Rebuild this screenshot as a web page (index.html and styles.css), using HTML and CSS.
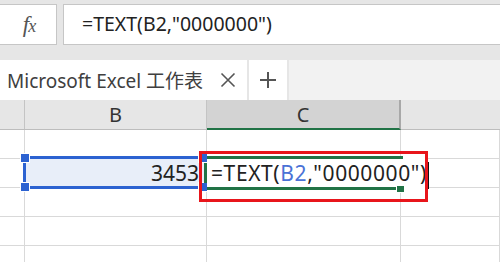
FILE: index.html
```html
<!DOCTYPE html>
<html lang="zh">
<head>
    <meta charset="UTF-8">
    <meta name="viewport" content="width=device-width, initial-scale=1.0">
    <title>Microsoft Excel 工作表</title>
    <link rel="stylesheet" href="styles.css">
</head>
<body>
    <div class="formula-bar">
        <div class="fx-box"><span class="fx">f<span class="fx-x">x</span></span></div>
        <div class="formula-input">=TEXT(B2,"0000000")</div>
    </div>

    <div class="tabs">
        <div class="tab">
            <span class="tab-name">Microsoft Excel 工作表</span>
            <svg class="tab-close" width="16" height="16" viewBox="0 0 16 16">
                <path d="M1.5 1.5 L14.5 14.5 M14.5 1.5 L1.5 14.5" stroke="#555" stroke-width="1.6" fill="none"/>
            </svg>
        </div>
        <div class="tab-add">
            <svg width="18" height="18" viewBox="0 0 18 18">
                <path d="M9 1 V17 M1 9 H17" stroke="#555" stroke-width="2" fill="none"/>
            </svg>
        </div>
        <div class="tab-rest"></div>
    </div>

    <div class="sheet">
        <div class="col-head">
            <div class="head corner"></div>
            <div class="head col-b">B</div>
            <div class="head col-c selected">C</div>
            <div class="head col-d"></div>
        </div>

        <div class="row">
            <div class="cell corner"></div>
            <div class="cell col-b"></div>
            <div class="cell col-c"></div>
            <div class="cell col-d"></div>
        </div>
        <div class="row">
            <div class="cell corner"></div>
            <div class="cell col-b num active">3453</div>
            <div class="cell col-c"></div>
            <div class="cell col-d"></div>
        </div>
        <div class="row">
            <div class="cell corner"></div>
            <div class="cell col-b"></div>
            <div class="cell col-c"></div>
            <div class="cell col-d"></div>
        </div>
        <div class="row">
            <div class="cell corner"></div>
            <div class="cell col-b"></div>
            <div class="cell col-c"></div>
            <div class="cell col-d"></div>
        </div>
        <div class="row">
            <div class="cell corner"></div>
            <div class="cell col-b"></div>
            <div class="cell col-c"></div>
            <div class="cell col-d"></div>
        </div>

        <!-- 引用区域 B2 -->
        <div class="ref-box">
            <span class="handle h-tl"></span>
            <span class="handle h-bl"></span>
            <span class="handle h-tr"></span>
            <span class="handle h-br"></span>
        </div>

        <!-- 正在编辑的 C2 -->
        <div class="editor">
            <div class="editor-frame"></div>
            <span class="editor-bar"></span>
            <span class="fill-handle"></span>
            <div class="editor-text">=TEXT(<span class="ref">B2</span>,"0000000")<span class="caret"></span></div>
        </div>

        <div class="mark"></div>
    </div>
</body>
</html>
```

FILE: styles.css
```css
body {
    margin: 0;
    font-family: "Noto Sans", "Noto Sans CJK SC", sans-serif;
    background-color: #fff;
    color: #222;
    overflow: hidden;
}
.formula-bar {
    background-color: #e6e6e6;
    padding: 4px 0 15px;
    display: flex;
    gap: 6px;
}
.fx-box {
    width: 57px;
    height: 41px;
    box-sizing: border-box;
    background-color: #fff;
    border: 1px solid #c6c6c6;
    border-left: none;
    display: flex;
    align-items: center;
    justify-content: center;
}
.fx {
    font-family: "Liberation Serif", serif;
    font-style: italic;
    font-size: 23px;
    color: #555;
    margin-left: 2px;
    letter-spacing: -1px;
}
.fx-x {
    font-size: 18px;
}
.formula-input {
    flex: 1;
    height: 41px;
    box-sizing: border-box;
    background-color: #fff;
    border: 1px solid #c6c6c6;
    border-right: none;
    padding-left: 18px;
    font-size: 19.5px;
    line-height: 38px;
}
.tabs {
    display: flex;
    height: 40px;
    background-color: #e6e6e6;
}
.tab {
    width: 247px;
    background-color: #fff;
    display: flex;
    align-items: center;
    padding-left: 7px;
    box-sizing: border-box;
}
.tab-name {
    font-size: 19px;
    color: #404040;
}
.tab-close {
    margin-left: 17px;
}
.tab-add {
    width: 38px;
    margin-left: 2px;
    background-color: #fff;
    display: flex;
    align-items: center;
    justify-content: center;
}
.tab-rest {
    flex: 1;
    margin-left: 2px;
    background-color: #f2f2f2;
}
.sheet {
    position: relative;
}
.col-head {
    display: flex;
    height: 30px;
    background-color: #e6e6e6;
    border-bottom: 1px solid #bdbdbd;
    box-sizing: border-box;
}
.head {
    border-right: 1px solid #c4c4c4;
    text-align: center;
    font-size: 20px;
    line-height: 30px;
    color: #333;
    box-sizing: border-box;
}
.head.selected {
    background-color: #d3d3d3;
    border-bottom: 2px solid #217346;
    border-right: 2px solid #a8a8a8;
    height: 30px;
}
.corner {
    width: 25px;
}
.col-b {
    width: 182px;
}
.col-c {
    width: 194px;
}
.col-d {
    flex: 1;
    border-right: none;
}
.row {
    display: flex;
    height: 29px;
}
.cell {
    border-right: 1px solid #d9d9d9;
    border-bottom: 1px solid #d9d9d9;
    box-sizing: border-box;
    font-size: 21px;
    line-height: 28px;
}
.cell.num {
    text-align: right;
    padding-right: 7px;
}
.cell.active {
    background-color: #e8eef9;
}
.ref-box {
    position: absolute;
    left: 23px;
    top: 56px;
    width: 181px;
    height: 33px;
    box-sizing: border-box;
    border: 3px solid #2c62d1;
    border-right: none;
}
.handle {
    position: absolute;
    width: 8px;
    height: 8px;
    background-color: #2c62d1;
    border: 1px solid #fff;
    box-sizing: content-box;
}
.h-tl { left: -6px; top: -6px; }
.h-bl { left: -6px; bottom: -6px; }
.h-tr { right: -4px; top: -6px; }
.h-br { right: -4px; bottom: -6px; }
.editor {
    position: absolute;
    left: 207px;
    top: 56px;
    width: 218px;
    height: 34px;
    background-color: #fff;
}
.editor-frame {
    position: absolute;
    left: 0;
    top: 0;
    width: 196px;
    height: 34px;
    box-sizing: border-box;
    border-top: 3px solid #217346;
    border-bottom: 3px solid #217346;
}
.editor-bar {
    position: absolute;
    left: -3px;
    top: 7px;
    width: 3px;
    height: 20px;
    background-color: #217346;
}
.fill-handle {
    position: absolute;
    left: 189px;
    top: 29px;
    width: 7px;
    height: 6px;
    background-color: #217346;
    border: 1px solid #fff;
}
.editor-text {
    position: relative;
    padding-left: 4px;
    font-size: 21px;
    letter-spacing: 0.6px;
    line-height: 34px;
    white-space: nowrap;
}
.ref {
    color: #4a72d6;
}
.caret {
    display: inline-block;
    width: 2px;
    height: 27px;
    background-color: #111;
    vertical-align: middle;
    margin-left: 0;
}
.mark {
    position: absolute;
    left: 199px;
    top: 51px;
    width: 229px;
    height: 51px;
    box-sizing: border-box;
    border: 3px solid #e8151b;
}
```
